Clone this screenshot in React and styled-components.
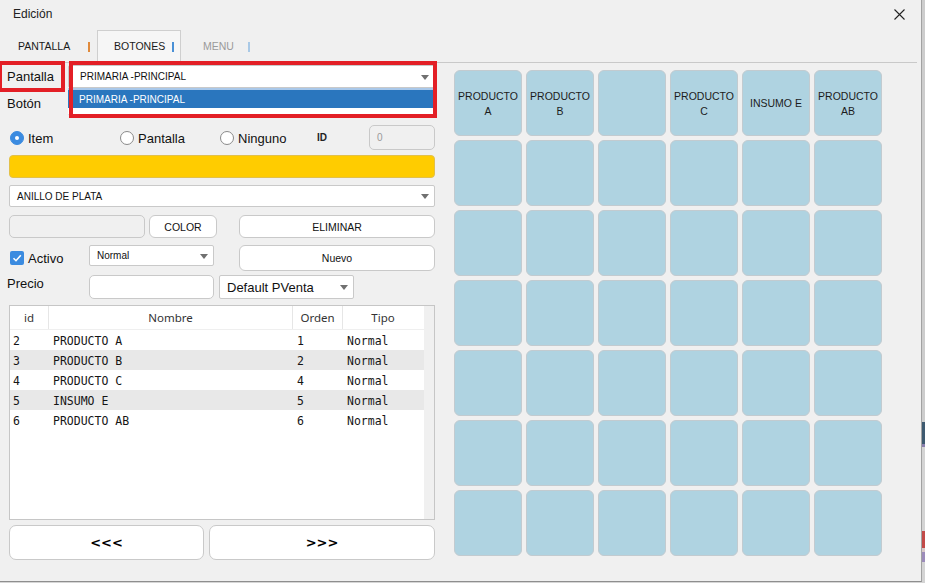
import React from 'react';
import styled, { createGlobalStyle } from 'styled-components';

const GlobalStyle = createGlobalStyle`
  * { box-sizing: border-box; }
  body {
    margin: 0;
    background: #d6d6d6;
    font-family: "Liberation Sans", Arial, sans-serif;
    color: #111;
  }
`;

const rows = [
  { id: 2, nombre: 'PRODUCTO A', orden: 1, tipo: 'Normal' },
  { id: 3, nombre: 'PRODUCTO B', orden: 2, tipo: 'Normal' },
  { id: 4, nombre: 'PRODUCTO C', orden: 4, tipo: 'Normal' },
  { id: 5, nombre: 'INSUMO E', orden: 5, tipo: 'Normal' },
  { id: 6, nombre: 'PRODUCTO AB', orden: 6, tipo: 'Normal' },
];

const tiles = ['PRODUCTO A', 'PRODUCTO B', '', 'PRODUCTO C', 'INSUMO E', 'PRODUCTO AB'];

const backdrop = [
  { h: 422, c: '#cdcdcd' },
  { h: 22, c: '#3e5a70' },
  { h: 3, c: '#8a7fae' },
  { h: 84, c: '#d4d4d4' },
  { h: 17, c: '#c24a48' },
  { h: 4, c: '#d8c8c8' },
  { h: 10, c: '#9c8cba' },
  { h: 21, c: '#d4d4d4' },
];

const App = () => {
  return (
    <>
      <GlobalStyle />
      <Page>
        <Window>
          <TitleBar>
            <Title>Edición</Title>
            <CloseButton>
              <svg width="11" height="11" viewBox="0 0 11 11">
                <path d="M0.5 0.5 L10.5 10.5 M10.5 0.5 L0.5 10.5" stroke="#222" strokeWidth="1.1" />
              </svg>
            </CloseButton>
          </TitleBar>

          <TabBar>
            <Tab $w={97}>
              PANTALLA
              <TabSep $c="#e08a3c" />
            </Tab>
            <Tab $w={84} $active $pl={16}>
              BOTONES
              <TabSep $c="#4a90d6" />
            </Tab>
            <Tab $w={76} $muted $pl={21}>
              MENU
              <TabSep $c="#a9c9e6" />
            </Tab>
          </TabBar>

          <Body>
            <LeftCol>
              <FieldRow $mt={2} $h={23}>
                <FieldLabel>
                  Pantalla
                  <Highlight style={{ top: -4, left: -9, right: 3, bottom: -4 }} />
                </FieldLabel>
                <SelectWrap>
                  <Select $w={367} $h={23} $pl={11}>
                    PRIMARIA -PRINCIPAL
                    <Arrow />
                  </Select>
                  <Popup>
                    <PopupItem>PRIMARIA -PRINCIPAL</PopupItem>
                  </Popup>
                  <Highlight style={{ top: -4, left: 1, right: -2, height: 57 }} />
                </SelectWrap>
              </FieldRow>

              <FieldRow $mt={4} $h={23}>
                <FieldLabel>Botón</FieldLabel>
                <Select $w={367} $h={23} $pl={11} $focus />
              </FieldRow>

              <FieldRow $mt={10} $h={25}>
                <RadioOption $w={110}>
                  <Radio $checked />
                  Item
                </RadioOption>
                <RadioOption $w={100}>
                  <Radio />
                  Pantalla
                </RadioOption>
                <RadioOption $w={98}>
                  <Radio />
                  Ninguno
                </RadioOption>
                <SmallLabel>ID</SmallLabel>
                <TextBox $w={66} $h={25} $disabled>0</TextBox>
              </FieldRow>

              <ColorBar />

              <Select $w={426} $h={22} $pl={7} $mt={7}>
                ANILLO DE PLATA
                <Arrow />
              </Select>

              <FieldRow $mt={8} $h={23} $gap={4}>
                <TextBox $w={136} $h={23} $disabled />
                <Button $w={68} $h={23}>COLOR</Button>
                <Spacer $w={14} />
                <Button $w={196} $h={23}>ELIMINAR</Button>
              </FieldRow>

              <FieldRow $mt={7} $h={26}>
                <CheckOption>
                  <Checkbox>
                    <svg width="12" height="12" viewBox="0 0 12 12">
                      <path d="M2.5 6.2 L5 8.7 L9.8 3.2" fill="none" stroke="#fff" strokeWidth="1.6" />
                    </svg>
                  </Checkbox>
                  Activo
                </CheckOption>
                <Select $w={125} $h={21} $pl={7} $self="flex-start">
                  Normal
                  <Arrow />
                </Select>
                <Spacer $w={25} />
                <Button $w={196} $h={26}>Nuevo</Button>
              </FieldRow>

              <FieldRow $mt={4} $h={24}>
                <PriceLabel>Precio</PriceLabel>
                <TextBox $w={125} $h={24} />
                <Spacer $w={5} />
                <Select $w={135} $h={24} $pl={7} $fs={13}>
                  Default PVenta
                  <Arrow />
                </Select>
              </FieldRow>

              <TableBox>
                <TableGrid>
                  <HeadRow>
                    <HeadCell>id</HeadCell>
                    <HeadCell>Nombre</HeadCell>
                    <HeadCell>Orden</HeadCell>
                    <HeadCell $last>Tipo</HeadCell>
                  </HeadRow>
                  {rows.map((r, i) => (
                    <DataRow key={r.id} $alt={i % 2 === 1}>
                      <Cell $pl={3}>{r.id}</Cell>
                      <Cell>{r.nombre}</Cell>
                      <Cell>{r.orden}</Cell>
                      <Cell>{r.tipo}</Cell>
                    </DataRow>
                  ))}
                </TableGrid>
              </TableBox>

              <NavRow>
                <NavButton $w={195}>&lt;&lt;&lt;</NavButton>
                <NavButton $w={226}>&gt;&gt;&gt;</NavButton>
              </NavRow>
            </LeftCol>

            <TileGrid>
              {Array.from({ length: 42 }).map((_, i) => {
                const label = i < 6 ? tiles[i] : '';
                const parts = label.startsWith('PRODUCTO') ? ['PRODUCTO', label.slice(9)] : [label];
                return (
                  <Tile key={i}>
                    {label &&
                      parts.map((p, k) => <span key={k}>{p}</span>)}
                  </Tile>
                );
              })}
            </TileGrid>
          </Body>
        </Window>
        <Backdrop>
          {backdrop.map((b, i) => (
            <Strip key={i} $h={b.h} $c={b.c} />
          ))}
        </Backdrop>
      </Page>
    </>
  );
};

export default App;

const Page = styled.div`
  display: flex;
  width: 925px;
  height: 583px;
  overflow: hidden;
`;

const Window = styled.div`
  display: flex;
  flex-direction: column;
  width: 922px;
  height: 582px;
  background: #f0f0f0;
  border-right: 1px solid #a2a2a2;
  border-bottom: 1px solid #8e8e8e;
`;

const Backdrop = styled.div`
  display: flex;
  flex-direction: column;
  flex: 1;
`;

const Strip = styled.div`
  height: ${({ $h }) => $h}px;
  background: ${({ $c }) => $c};
  flex-shrink: 0;
`;

const TitleBar = styled.div`
  display: flex;
  align-items: center;
  height: 30px;
  padding: 0 16px 2px 13px;
`;

const Title = styled.span`
  font-size: 12px;
  color: #222;
`;

const CloseButton = styled.span`
  display: flex;
  margin-left: auto;
`;

const TabBar = styled.div`
  display: flex;
  height: 33px;
  margin-right: 4px;
  border-bottom: 1px solid #c9c9c9;
`;

const Tab = styled.div`
  display: flex;
  align-items: center;
  width: ${({ $w }) => $w}px;
  padding: 0 6px 0 ${({ $pl }) => $pl || 17}px;
  font-size: 10.5px;
  color: ${({ $muted }) => ($muted ? '#9a9a9a' : '#1a1a1a')};
  background: ${({ $active }) => ($active ? '#f6f6f6' : 'transparent')};
  border: 1px solid ${({ $active }) => ($active ? '#cfcfcf' : 'transparent')};
  border-bottom: 2px solid ${({ $active }) => ($active ? '#3f82c6' : 'transparent')};
  margin-bottom: -1px;
`;

const TabSep = styled.span`
  width: 2px;
  height: 10px;
  margin-left: auto;
  margin-top: 2px;
  background: ${({ $c }) => $c};
`;

const Body = styled.div`
  display: flex;
  gap: 19px;
  padding-left: 9px;
`;

const LeftCol = styled.div`
  display: flex;
  flex-direction: column;
  width: 426px;
`;

const FieldRow = styled.div`
  display: flex;
  align-items: center;
  gap: ${({ $gap }) => $gap || 0}px;
  height: ${({ $h }) => $h}px;
  margin-top: ${({ $mt }) => $mt || 0}px;
`;

const FieldLabel = styled.span`
  position: relative;
  display: flex;
  align-items: center;
  align-self: stretch;
  width: 61px;
  margin-left: -2px;
  font-size: 13px;
`;

const PriceLabel = styled.span`
  width: 82px;
  margin-left: -2px;
  align-self: flex-start;
  padding-top: 1px;
  font-size: 13px;
`;

const Highlight = styled.div`
  position: absolute;
  border: 4px solid #e31f26;
  z-index: 3;
  pointer-events: none;
`;

const SelectWrap = styled.div`
  position: relative;
  z-index: 2;
`;

const Select = styled.div`
  position: relative;
  display: flex;
  align-items: center;
  flex-shrink: 0;
  align-self: ${({ $self }) => $self || 'auto'};
  width: ${({ $w }) => $w}px;
  height: ${({ $h }) => $h}px;
  margin-top: ${({ $mt }) => $mt || 0}px;
  padding-left: ${({ $pl }) => $pl}px;
  font-size: ${({ $fs }) => $fs || 10}px;
  background: #fff;
  border: 1px solid ${({ $focus }) => ($focus ? '#3c8ce0' : '#c9c9c9')};
  border-radius: 2px;
`;

const Arrow = styled.span`
  position: absolute;
  right: 5px;
  top: 50%;
  margin-top: -2px;
  border-left: 4.5px solid transparent;
  border-right: 4.5px solid transparent;
  border-top: 5px solid #707070;
`;

const Popup = styled.div`
  position: absolute;
  top: 100%;
  left: 0;
  right: 0;
  height: 26px;
  background: #fff;
  border-top: 2px solid #a9c8ea;
`;

const PopupItem = styled.div`
  display: flex;
  align-items: center;
  height: 18px;
  padding-left: 11px;
  font-size: 10px;
  color: #fff;
  background: #2a76be;
`;

const RadioOption = styled.label`
  display: flex;
  align-items: center;
  gap: 4px;
  width: ${({ $w }) => $w}px;
  padding-left: 1px;
  padding-top: 1px;
  font-size: 13px;
`;

const Radio = styled.span`
  width: 14px;
  height: 14px;
  border-radius: 50%;
  background: ${({ $checked }) => ($checked ? '#3b8be0' : '#fff')};
  border: 1px solid ${({ $checked }) => ($checked ? '#3b8be0' : '#8a8a8a')};
  position: relative;

  &::after {
    content: '';
    display: ${({ $checked }) => ($checked ? 'block' : 'none')};
    position: absolute;
    top: 4px;
    left: 4px;
    width: 4px;
    height: 4px;
    border-radius: 50%;
    background: #fff;
  }
`;

const SmallLabel = styled.span`
  width: 52px;
  font-size: 10px;
  font-weight: bold;
  color: #222;
`;

const TextBox = styled.div`
  display: flex;
  align-items: center;
  flex-shrink: 0;
  width: ${({ $w }) => $w}px;
  height: ${({ $h }) => $h}px;
  padding-left: 7px;
  font-size: 10px;
  color: #9a9a9a;
  background: ${({ $disabled }) => ($disabled ? '#f0f0f0' : '#fff')};
  border: 1px solid #c9c9c9;
  border-radius: 5px;
`;

const ColorBar = styled.div`
  height: 23px;
  margin-top: 5px;
  background: #ffcc00;
  border: 1px solid #e2c04a;
  border-radius: 4px;
`;

const Button = styled.div`
  display: flex;
  align-items: center;
  justify-content: center;
  flex-shrink: 0;
  width: ${({ $w }) => $w}px;
  height: ${({ $h }) => $h}px;
  font-size: 10.5px;
  background: #fff;
  border: 1px solid #c9c9c9;
  border-radius: 6px;
`;

const Spacer = styled.span`
  width: ${({ $w }) => $w}px;
  flex-shrink: 0;
`;

const CheckOption = styled.label`
  display: flex;
  align-items: center;
  gap: 4px;
  width: 80px;
  padding-left: 1px;
  font-size: 13px;
`;

const Checkbox = styled.span`
  display: flex;
  align-items: center;
  justify-content: center;
  width: 14px;
  height: 14px;
  border-radius: 2px;
  background: #3b8be0;
`;

const TableBox = styled.div`
  display: flex;
  height: 215px;
  margin-top: 6px;
  background: #f0f0f0;
  border: 1px solid #c6c6c6;
`;

const TableGrid = styled.div`
  display: flex;
  flex-direction: column;
  width: 414px;
  background: #fff;
`;

const cols = '39px 244px 50px 81px';

const HeadRow = styled.div`
  display: grid;
  grid-template-columns: ${cols};
  height: 24px;
  border-bottom: 1px solid #efefef;
`;

const HeadCell = styled.div`
  display: flex;
  align-items: center;
  justify-content: center;
  font-family: "Noto Sans", "Open Sans", sans-serif;
  font-size: 11.5px;
  color: #333;
  border-right: 1px solid ${({ $last }) => ($last ? 'transparent' : '#e6e6e6')};
`;

const DataRow = styled.div`
  display: grid;
  grid-template-columns: ${cols};
  height: 20px;
  background: ${({ $alt }) => ($alt ? '#e8e8e8' : '#fff')};
`;

const Cell = styled.div`
  display: flex;
  align-items: center;
  padding-left: ${({ $pl }) => $pl || 4}px;
  padding-top: 1px;
  font-family: "DejaVu Sans Mono", "Liberation Mono", monospace;
  font-size: 11.5px;
  color: #151515;
  white-space: pre;
`;

const NavRow = styled.div`
  display: flex;
  gap: 5px;
  margin-top: 5px;
`;

const NavButton = styled.div`
  display: flex;
  align-items: center;
  justify-content: center;
  width: ${({ $w }) => $w}px;
  height: 35px;
  font-family: "DejaVu Sans", sans-serif;
  font-weight: bold;
  font-size: 13px;
  color: #000;
  background: #fff;
  border: 1px solid #c9c9c9;
  border-radius: 7px;
`;

const TileGrid = styled.div`
  display: grid;
  grid-template-columns: repeat(6, 68px);
  grid-auto-rows: 66px;
  gap: 4px;
  margin-top: 7px;
  align-content: start;
`;

const Tile = styled.div`
  display: flex;
  flex-direction: column;
  align-items: center;
  justify-content: center;
  padding-top: 1px;
  background: #afd3e1;
  border: 1px solid #c2cbd0;
  border-radius: 6px;
  font-size: 10.5px;
  line-height: 15px;
  color: #1c1c1c;
  text-align: center;
`;
